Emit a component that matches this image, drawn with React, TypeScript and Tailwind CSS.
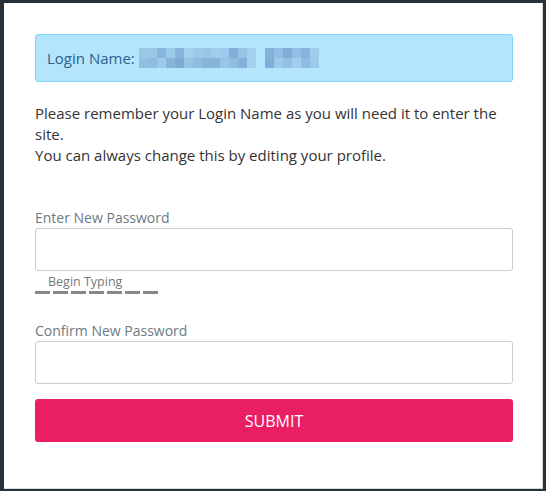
import React from 'react';

const row1 = ['#9cc6e6', '#9cc6e6', '#86b6de', '#9ccbea', '#86b4dc', '#a4d0ee', '#9ccbea', '#98c8e8', '#a0cdec', '#9ccaea', '#80aed8', '#96c5e6', '#a4d0ee', '#b3e5fc', '#84b2da', '#92c0e3', '#80aed8', '#92c1e3', '#86b5dc', '#a0cdec'];
const row2 = ['#92c0e3', '#8fbde1', '#9ccbea', '#86b4dc', '#7faad6', '#96c5e6', '#8ebde1', '#86b4dc', '#86b4dc', '#98c6e7', '#8ebde1', '#84b2da', '#a4d0ee', '#b3e5fc', '#80aed8', '#9ccbea', '#92c0e3', '#a0cdec', '#8fbde1', '#9ccbea'];

function Blurred() {
  return (
    <span className="inline-flex flex-col align-middle ml-[4px]">
      <span className="flex">
        {row1.map((c, i) => (
          <span key={i} className="w-[9px] h-[10px]" style={{ backgroundColor: c }} />
        ))}
      </span>
      <span className="flex">
        {row2.map((c, i) => (
          <span key={i} className="w-[9px] h-[10px]" style={{ backgroundColor: c }} />
        ))}
      </span>
    </span>
  );
}

export default function App() {
  return (
    <div className="h-[491px] w-[546px] bg-[#263238] pt-[3px] pl-[4px] pr-[3px] pb-[2px] font-['Open_Sans',sans-serif]">
      <div className="h-full bg-white border-r border-b border-[#d8d8d8] pl-[31px] pr-[29px] pt-[31px]">
        <div className="flex items-center h-[48px] bg-[#b3e5fc] border border-[#81d4fa] rounded-[3px] px-[11px] text-[15px] text-[#2d5f8f]">
          <span>Login Name:</span>
          <Blurred />
        </div>

        <p className="mt-[21px] text-[15px] leading-[21px] text-[#333]">
          Please remember your Login Name as you will need it to enter the site.
          <br />
          You can always change this by editing your profile.
        </p>

        <form className="mt-[42px]">
          <label className="block text-[14px] leading-[20px] text-[#6c7a84]">Enter New Password</label>
          <input
            type="password"
            className="block w-full h-[43px] border border-[#ccc] rounded-[3px] px-3 outline-none"
          />
          <div className="pl-[13px] mt-[3px] text-[12.5px] leading-[16px] text-[#777]">Begin Typing</div>
          <div className="flex gap-[3px] mt-[1px]">
            {[0, 1, 2, 3, 4, 5, 6].map((i) => (
              <span key={i} className="w-[15px] h-[3px] bg-[#888]" />
            ))}
          </div>

          <label className="block mt-[27px] text-[14px] leading-[20px] text-[#6c7a84]">Confirm New Password</label>
          <input
            type="password"
            className="block w-full h-[43px] border border-[#ccc] rounded-[3px] px-3 outline-none"
          />

          <button
            type="button"
            className="block w-full h-[43px] mt-[15px] bg-[#e91e63] text-white text-[16px] rounded-[3px]"
          >
            SUBMIT
          </button>
        </form>
      </div>
    </div>
  );
}
